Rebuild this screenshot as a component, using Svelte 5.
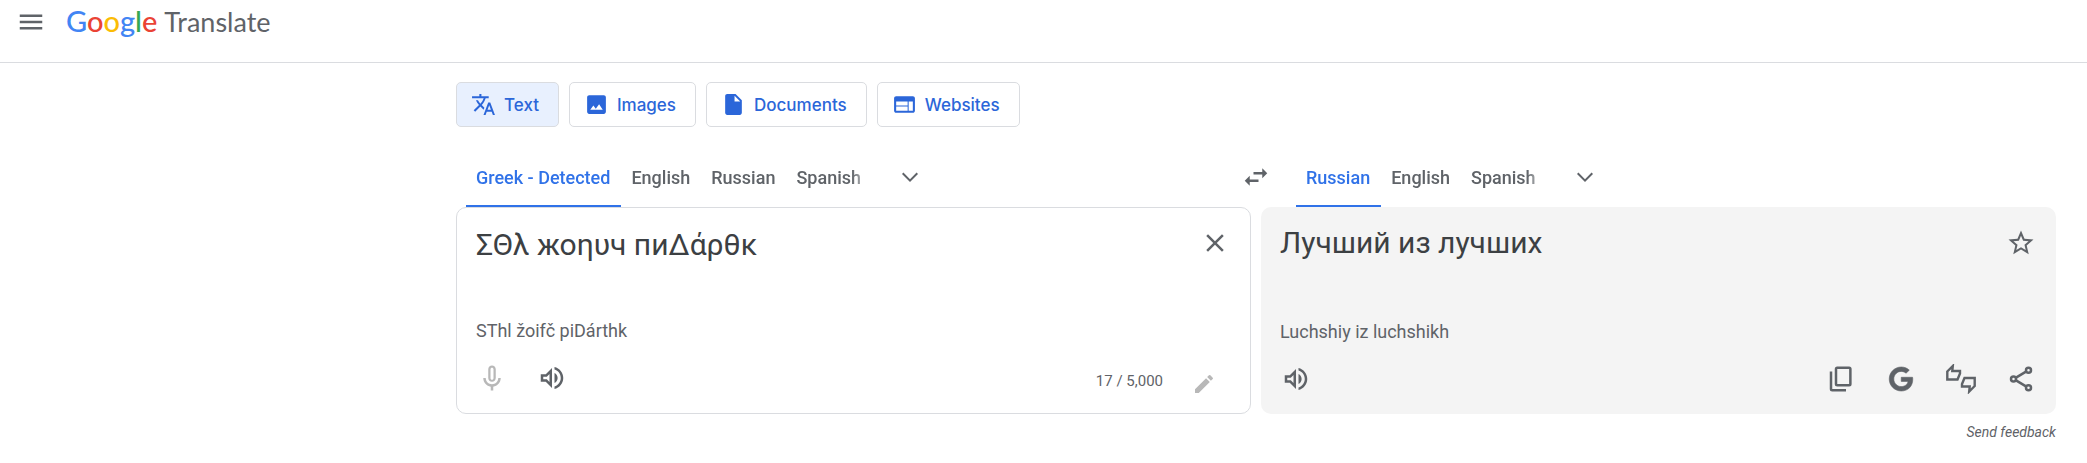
<script lang="ts">
  const modes = [
    { id: 'text', label: 'Text' },
    { id: 'images', label: 'Images' },
    { id: 'documents', label: 'Documents' },
    { id: 'websites', label: 'Websites' },
  ];

  const modeIcons: Record<string, string> = {
    text: 'M12.87 15.07l-2.54-2.51.03-.03c1.74-1.94 2.98-4.17 3.71-6.53H17V4h-7V2H8v2H1v1.99h11.17C11.5 7.92 10.44 9.75 9 11.35 8.07 10.32 7.3 9.19 6.69 8h-2c.73 1.63 1.73 3.17 2.98 4.56l-5.09 5.02L4 19l5-5 3.11 3.11.76-2.04zM18.5 10h-2L12 22h2l1.12-3h4.75L21 22h2l-4.5-12zm-2.62 7l1.62-4.33L19.12 17h-3.24z',
    images: 'M21 19V5c0-1.1-.9-2-2-2H5c-1.1 0-2 .9-2 2v14c0 1.1.9 2 2 2h14c1.1 0 2-.9 2-2zM6 17l3-4 2.3 3 3.2-4.3L18 17H6z',
    documents: 'M6 2c-1.1 0-2 .9-2 2v16c0 1.1.9 2 2 2h12c1.1 0 2-.9 2-2V8l-6-6H6zm7 7V3.5L18.5 9H13z',
    websites: 'M20 4H4c-1.1 0-2 .9-2 2v12c0 1.1.9 2 2 2h16c1.1 0 2-.9 2-2V6c0-1.1-.9-2-2-2zm-5 14H4v-4h11v4zm0-5H4V9h11v4zm5 5h-4V9h4v9z',
  };

  const sourceLanguages = ['Greek - Detected', 'English', 'Russian', 'Spanish'];
  const targetLanguages = ['Russian', 'English', 'Spanish'];

  let mode = $state('text');
  let source = $state('Greek - Detected');
  let target = $state('Russian');
  let text = $state('ΣΘλ жоηυч пиΔάρθκ');
</script>

{#snippet speaker()}
  <svg viewBox="0 0 24 24" fill="currentColor">
    <path d="M3 9v6h4l5 5V4L7 9H3zm7-.17v6.34L7.83 13H5v-2h2.83L10 8.83zM16.5 12c0-1.77-1.02-3.29-2.5-4.03v8.05c1.48-.73 2.5-2.25 2.5-4.02zM14 3.23v2.06c2.89.86 5 3.54 5 6.71s-2.11 5.85-5 6.71v2.06c4.01-.91 7-4.49 7-8.77s-2.99-7.86-7-8.77z"/>
  </svg>
{/snippet}

{#snippet chevron()}
  <svg viewBox="0 0 24 24" fill="currentColor">
    <path d="M5.41 7.59L4 9l8 8 8-8-1.41-1.41L12 14.17z"/>
  </svg>
{/snippet}

<header>
  <button class="menu" aria-label="Main menu">
    <svg viewBox="0 0 24 24" fill="currentColor"><path d="M3 18h18v-2H3v2zm0-5h18v-2H3v2zm0-7v2h18V6H3z"/></svg>
  </button>
  <a class="brand" href="#home">
    <span class="google"><span class="blue">G</span><span class="red">o</span><span class="yellow">o</span><span class="blue">g</span><span class="green">l</span><span class="red">e</span></span>
    <span class="product">Translate</span>
  </a>
</header>

<main>
  <nav class="modes" aria-label="Translation types">
    {#each modes as m}
      <button class="mode" class:active={mode === m.id} onclick={() => (mode = m.id)}>
        <svg viewBox="0 0 24 24" fill="currentColor"><path d={modeIcons[m.id]}/></svg>
        <span>{m.label}</span>
      </button>
    {/each}
  </nav>

  <div class="languages">
    <div class="language-bar">
      <div class="tabs" role="tablist" aria-label="Source language">
        {#each sourceLanguages as lang}
          <button class="tab" role="tab" aria-selected={source === lang} class:active={source === lang} onclick={() => (source = lang)}>{lang}</button>
        {/each}
      </div>
      <button class="icon-btn more" aria-label="More source languages">{@render chevron()}</button>
    </div>
    <button class="swap" aria-label="Swap languages">
      <svg viewBox="0 0 24 24" fill="currentColor"><path d="M6.99 11L3 15l3.99 4v-3H14v-2H6.99v-3zM21 9l-3.99-4v3H10v2h7.01v3L21 9z"/></svg>
    </button>
    <div class="language-bar">
      <div class="tabs" role="tablist" aria-label="Target language">
        {#each targetLanguages as lang}
          <button class="tab" role="tab" aria-selected={target === lang} class:active={target === lang} onclick={() => (target = lang)}>{lang}</button>
        {/each}
      </div>
      <button class="icon-btn more" aria-label="More target languages">{@render chevron()}</button>
    </div>
  </div>

  <div class="panels">
    <section class="panel source">
      <div class="top">
        <textarea class="phrase" rows="1" aria-label="Source text" spellcheck="false" bind:value={text}></textarea>
        <button class="icon-btn" aria-label="Clear source text" onclick={() => (text = '')}>
          <svg viewBox="0 0 24 24" fill="currentColor"><path d="M19 6.41L17.59 5 12 10.59 6.41 5 5 6.41 10.59 12 5 17.59 6.41 19 12 13.41 17.59 19 19 17.59 13.41 12z"/></svg>
        </button>
      </div>
      <p class="romanized">SThl žoifč piDárthk</p>
      <div class="actions">
        <button class="icon-btn" aria-label="Translate by voice" disabled>
          <svg viewBox="0 0 24 24" fill="currentColor"><path d="M12 15c1.66 0 3-1.34 3-3V5c0-1.66-1.34-3-3-3S9 3.34 9 5v7c0 1.66 1.34 3 3 3zM10.8 4.9c0-.66.54-1.2 1.2-1.2s1.2.54 1.2 1.2v7.2c0 .66-.54 1.2-1.2 1.2s-1.2-.54-1.2-1.2V4.9zM19 12h-2c0 2.76-2.24 5-5 5s-5-2.24-5-5H5c0 3.53 2.61 6.43 6 6.92V22h2v-3.08c3.39-.49 6-3.39 6-6.92z"/></svg>
        </button>
        <button class="icon-btn" aria-label="Listen to source text">{@render speaker()}</button>
        <span class="count">{text.length} / 5,000</span>
        <button class="icon-btn pencil" aria-label="Handwriting" disabled>
          <svg viewBox="0 0 24 24" fill="currentColor"><path d="M3 17.25V21h3.75L17.81 9.94l-3.75-3.75L3 17.25zM20.71 7.04a1 1 0 0 0 0-1.41l-2.34-2.34a1 1 0 0 0-1.41 0l-1.83 1.83 3.75 3.75 1.83-1.83z"/></svg>
        </button>
      </div>
    </section>

    <section class="panel target">
      <div class="top">
        <p class="phrase" lang="ru">Лучший из лучших</p>
        <button class="icon-btn" aria-label="Save translation">
          <svg viewBox="0 0 24 24" fill="currentColor"><path d="M22 9.24l-7.19-.62L12 2 9.19 8.63 2 9.24l5.46 4.73L5.82 21 12 17.27 18.18 21l-1.63-7.03L22 9.24zM12 15.4l-3.76 2.27 1-4.28-3.32-2.88 4.38-.38L12 6.1l1.71 4.04 4.38.38-3.32 2.88 1 4.28L12 15.4z"/></svg>
        </button>
      </div>
      <p class="romanized">Luchshiy iz luchshikh</p>
      <div class="actions">
        <button class="icon-btn first" aria-label="Listen to translation">{@render speaker()}</button>
        <button class="icon-btn" aria-label="Copy translation">
          <svg viewBox="0 0 24 24" fill="none" stroke="currentColor" stroke-width="2">
            <rect x="8" y="3" width="11.5" height="14" rx="1"/>
            <path d="M4 6v14a1 1 0 0 0 1 1H16"/>
          </svg>
        </button>
        <button class="icon-btn" aria-label="Search on Google">
          <svg viewBox="-3 -3 30 30" fill="currentColor" stroke="currentColor" stroke-width="0.6">
            <path d="M12.24 10.285V14.4h6.806c-.275 1.765-2.056 5.174-6.806 5.174-4.095 0-7.439-3.389-7.439-7.574s3.345-7.574 7.439-7.574c2.33 0 3.891.989 4.785 1.849l3.254-3.138C18.189 1.186 15.479 0 12.24 0c-6.635 0-12 5.365-12 12s5.365 12 12 12c6.926 0 11.52-4.869 11.52-11.726 0-.788-.085-1.39-.189-1.989H12.24z"/>
          </svg>
        </button>
        <button class="icon-btn" aria-label="Rate this translation">
          <svg viewBox="0 0 30 30" fill="none" stroke="currentColor" stroke-width="2.4">
            <path d="M1.3 7.5L6.8 2L6.3 7H14V9.5L11.5 15.5H1.3Z"/>
            <path d="M28.7 22L23.2 27.5L23.7 22.5H16V20L18.5 14H28.7Z"/>
          </svg>
        </button>
        <button class="icon-btn" aria-label="Share translation">
          <svg viewBox="0 0 24 24" fill="none" stroke="currentColor" stroke-width="2">
            <circle cx="18" cy="5" r="2"/><circle cx="6" cy="12" r="2"/><circle cx="18" cy="19" r="2"/>
            <path d="M8 10.9L16 6.1M8 13.1L16 17.9"/>
          </svg>
        </button>
      </div>
    </section>
  </div>

  <div class="feedback"><a href="#feedback">Send feedback</a></div>
</main>

<style>
  :global(body) {
    background: #fff;
    color: #3c4043;
    font-family: Roboto, "Noto Sans", sans-serif;
  }

  button {
    padding: 0;
    border: none;
    background: none;
    color: #5f6368;
    font-family: inherit;
    cursor: pointer;
  }

  svg {
    display: block;
    flex: none;
    width: 30px;
    height: 30px;
  }

  p {
    margin: 0;
  }

  header {
    display: flex;
    align-items: flex-start;
    gap: 20px;
    height: 63px;
    box-sizing: border-box;
    padding: 7px 16px 0;
    border-bottom: 1px solid #dadce0;
  }

  .brand {
    display: flex;
    align-items: baseline;
    gap: 7px;
    font-family: Lato, sans-serif;
    font-size: 27px;
    line-height: 28px;
    color: #5f6368;
    text-decoration: none;
  }

  .google {
    font-size: 29px;
    font-weight: 500;
  }

  .blue {
    color: #4285f4;
  }

  .red {
    color: #ea4335;
  }

  .yellow {
    color: #fbbc04;
  }

  .green {
    color: #34a853;
  }

  main {
    padding: 19px 31px 0 456px;
  }

  .modes {
    display: flex;
    gap: 10px;
  }

  .mode {
    display: flex;
    align-items: center;
    gap: 8px;
    height: 45px;
    padding: 0 19px 0 14px;
    border: 1px solid #dadce0;
    border-radius: 5px;
    color: #2b66d9;
    font-family: Inter, sans-serif;
    font-size: 17px;
    font-weight: 500;
  }

  .mode svg {
    width: 25px;
    height: 25px;
  }

  .mode.active {
    background: #e8f0fe;
  }

  .languages {
    display: grid;
    grid-template-columns: 1fr 30px 1fr;
    padding-top: 20px;
  }

  .language-bar {
    display: flex;
    align-items: center;
    height: 60px;
    padding-left: 10px;
  }

  .languages > .language-bar:last-child {
    padding-left: 25px;
  }

  .tabs {
    display: flex;
    height: 60px;
    mask-image: linear-gradient(to left, transparent, #000 20px);
  }

  .tab {
    box-sizing: border-box;
    padding: 2px 11px 0 10px;
    border-bottom: 2px solid transparent;
    font-size: 18px;
    font-weight: 500;
    white-space: nowrap;
  }

  .tab.active {
    border-bottom-color: #3072e8;
    color: #3072e8;
  }

  .more {
    margin-left: 8px;
  }

  .more svg {
    width: 24px;
    height: 24px;
  }

  .swap {
    display: flex;
    align-items: center;
  }

  .panels {
    display: grid;
    grid-template-columns: 1fr 1fr;
    gap: 10px;
  }

  .panel {
    box-sizing: border-box;
    border-radius: 10px;
  }

  .panel.source {
    padding: 5px;
    border: 1px solid #dadce0;
  }

  .panel.target {
    padding: 6px 5px 5px;
    background: #f4f4f4;
  }

  .top {
    display: flex;
    height: 100px;
  }

  .source .top {
    height: 99px;
  }

  .phrase {
    flex: 1;
    min-width: 0;
    box-sizing: border-box;
    height: 60px;
    padding: 10px 14px;
    border: none;
    outline: none;
    resize: none;
    overflow: hidden;
    background: none;
    color: #3c4043;
    font-family: Roboto, sans-serif;
    font-size: 30px;
    line-height: 40px;
  }

  .source .phrase {
    padding-top: 12px;
  }

  .romanized {
    padding: 7px 14px 5px;
    color: #5f6368;
    font-size: 18px;
    line-height: 24px;
  }

  .actions {
    display: flex;
    align-items: center;
    height: 60px;
  }

  .icon-btn {
    display: flex;
    flex: none;
    align-items: center;
    justify-content: center;
    width: 60px;
    height: 60px;
  }

  .icon-btn:disabled {
    color: #b8b8b8;
    cursor: default;
  }

  .first {
    margin-right: auto;
  }

  .count {
    margin-left: auto;
    padding-top: 5px;
    color: #5f6368;
    font-size: 15px;
  }

  .pencil {
    margin: 0 11px;
    padding-top: 12px;
  }

  .pencil svg {
    width: 24px;
    height: 24px;
  }

  .feedback {
    padding-top: 9px;
    font-size: 14px;
    font-style: italic;
    line-height: 18px;
    text-align: right;
  }

  .feedback a {
    color: #5f6368;
    text-decoration: none;
  }
</style>
